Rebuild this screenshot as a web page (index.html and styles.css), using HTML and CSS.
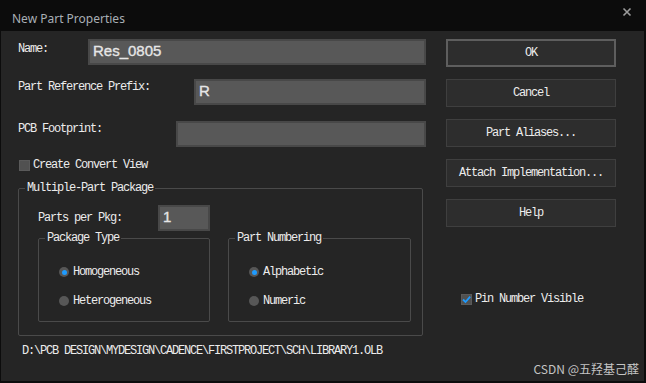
FILE: index.html
```html
<!DOCTYPE html>
<html>
<head>
<meta charset="utf-8">
<link rel="stylesheet" href="styles.css">
</head>
<body>
<div class="window">
  <div class="titlebar">
    <span class="title">New Part Properties</span>
    <svg class="close" width="10" height="10" viewBox="0 0 10 10"><path d="M1.5 1.5 L8.5 8.5 M8.5 1.5 L1.5 8.5" stroke="#9c9c9c" stroke-width="1.6" fill="none"/></svg>
  </div>
  <div class="content">
    <div class="left">
      <div class="row row-name">
        <span class="label">Name:</span>
        <div class="input input-name">Res_0805</div>
      </div>
      <div class="row row-prefix">
        <span class="label">Part Reference Prefix:</span>
        <div class="input input-prefix">R</div>
      </div>
      <div class="row row-footprint">
        <span class="label">PCB Footprint:</span>
        <div class="input input-footprint"></div>
      </div>
      <div class="check-row convert">
        <span class="checkbox"></span>
        <span class="label">Create Convert View</span>
      </div>
      <fieldset class="group multi">
        <legend class="label">Multiple-Part Package</legend>
        <div class="row row-parts">
          <span class="label parts-label">Parts per Pkg:</span>
          <div class="input input-parts">1</div>
        </div>
        <div class="subgroups">
          <fieldset class="group sub pkg-type">
            <legend class="label">Package Type</legend>
            <div class="radio-row first"><span class="radio on"></span><span class="label">Homogeneous</span></div>
            <div class="radio-row"><span class="radio"></span><span class="label">Heterogeneous</span></div>
          </fieldset>
          <fieldset class="group sub numbering">
            <legend class="label">Part Numbering</legend>
            <div class="radio-row first"><span class="radio on"></span><span class="label">Alphabetic</span></div>
            <div class="radio-row"><span class="radio"></span><span class="label">Numeric</span></div>
          </fieldset>
        </div>
      </fieldset>
      <div class="path label">D:\PCB DESIGN\MYDESIGN\CADENCE\FIRSTPROJECT\SCH\LIBRARY1.OLB</div>
    </div>
    <div class="right">
      <div class="btn default">OK</div>
      <div class="btn">Cancel</div>
      <div class="btn">Part Aliases...</div>
      <div class="btn">Attach Implementation...</div>
      <div class="btn">Help</div>
      <div class="check-row pin">
        <span class="checkbox checked"><svg width="11" height="11" viewBox="0 0 11 11"><path d="M2 5.5 L4.5 8 L9.2 2.6" stroke="#1e9bff" stroke-width="1.8" fill="none"/></svg></span>
        <span class="label">Pin Number Visible</span>
      </div>
    </div>
    <div class="watermark">CSDN @五羟基己醛</div>
  </div>
</div>
</body>
</html>
```

FILE: styles.css
```css
* { box-sizing: border-box; }
html, body {
  margin: 0;
  padding: 0;
  background: #0c0c0c;
}
.window {
  width: 646px;
  height: 383px;
  display: flex;
  flex-direction: column;
  background: #0c0c0c;
}
.titlebar {
  height: 31px;
  display: flex;
  align-items: center;
  justify-content: space-between;
  padding: 5px 14px 0 12px;
}
.title {
  font-family: "Noto Sans", sans-serif;
  font-size: 12px;
  color: #a9afb5;
}
.close { display: block; align-self: flex-start; margin-top: 2px; }
.content {
  position: relative;
  flex: 1;
  margin: 0 2px 2px 1px;
  background: #252525;
  display: flex;
  padding: 8px 0 0 17px;
  gap: 20px;
}
.label {
  font-family: "Liberation Mono", monospace;
  font-size: 12px;
  letter-spacing: -1.2px;
  line-height: 14px;
  color: #ececec;
  white-space: nowrap;
}
.left {
  width: 408px;
  display: flex;
  flex-direction: column;
}
.row {
  display: flex;
  align-items: flex-start;
}
.row .label { padding-top: 1px; }
.row-name .label { padding-top: 3px; }
.row-prefix { margin-top: 14px; }
.row-footprint { margin-top: 16px; }
.input {
  height: 26px;
  background: #585858;
  border: 2px solid #484848;
  margin-left: auto;
  font-family: "Liberation Sans", sans-serif;
  font-size: 15px;
  -webkit-text-stroke: 0.35px #e6e6e6;
  color: #e6e6e6;
  line-height: 20px;
  padding-left: 3px;
}
.input-name { width: 338px; }
.input-prefix { width: 232px; }
.input-footprint { width: 250px; }
.check-row {
  display: flex;
  align-items: center;
  gap: 3px;
}
.convert {
  margin-top: 11px;
  padding-left: 1px;
}
.checkbox {
  width: 11px;
  height: 11px;
  background: #515151;
  border: 1px solid #5a5a5a;
  display: flex;
  align-items: center;
  justify-content: center;
}
.checkbox svg { display: block; flex: none; }
.group {
  margin: 0;
  border: 1px solid #4a4a4a;
  border-radius: 2px;
  min-width: 0;
}
.group legend {
  padding: 0 2px;
}
.multi {
  width: 405px;
  margin-top: 9px;
  padding: 0 0 13px 19px;
}
.multi > legend { margin-left: -13px; }
.row-parts { margin-top: 10px; align-items: center; }
.row-parts .label { padding-top: 0; }
.parts-label { width: 120px; }
.input-parts { width: 52px; margin-left: 0; }
.subgroups {
  display: flex;
  gap: 18px;
}
.sub {
  padding: 0 0 13px 20px;
}
.sub > legend { margin-left: -14px; }
.pkg-type { width: 172px; }
.numbering { width: 183px; }
.radio-row {
  display: flex;
  align-items: center;
  gap: 4px;
  margin-top: 15px;
}
.radio-row.first { margin-top: 20px; }
.radio {
  width: 10px;
  height: 10px;
  border-radius: 50%;
  background: #575757;
  display: flex;
  align-items: center;
  justify-content: center;
}
.radio.on::after {
  content: "";
  width: 5px;
  height: 5px;
  border-radius: 50%;
  background: #1e9bff;
}
.path {
  margin-top: 8px;
  padding-left: 4px;
}
.right {
  width: 170px;
  display: flex;
  flex-direction: column;
  gap: 12px;
}
.btn {
  height: 28px;
  background: #2d2d2d;
  border: 1px solid #3f3f3f;
  display: flex;
  align-items: center;
  justify-content: center;
  font-family: "Liberation Mono", monospace;
  font-size: 12px;
  letter-spacing: -1.2px;
  color: #ececec;
  white-space: nowrap;
}
.btn.default {
  border: 2px solid #5e5e5e;
}
.pin {
  margin-top: 53px;
  padding-left: 15px;
}
.watermark {
  position: absolute;
  right: 5px;
  bottom: 3px;
  font-family: "Noto Sans CJK SC", sans-serif;
  font-size: 12px;
  line-height: 18px;
  color: #c4c4c4;
}
```
